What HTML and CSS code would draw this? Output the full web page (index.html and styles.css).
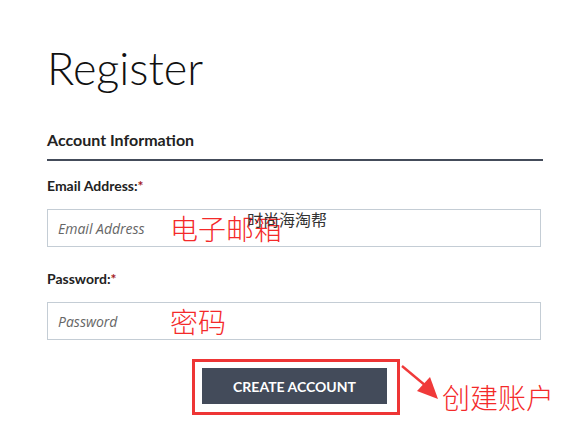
FILE: index.html
```html
<!DOCTYPE html>
<html lang="en">
	<head>
		<meta charset="UTF-8" />
		<meta name="viewport" content="width=device-width, initial-scale=1.0" />
		<title>Register</title>
		<link rel="stylesheet" href="styles.css">
	</head>
	<body>
		<section class="register">
			<h1 class="title">Register</h1>
			<h2 class="section-heading">Account Information</h2>

			<div class="field">
				<label class="field-label" for="email">Email Address:<span class="required">*</span></label>
				<div class="input-wrap">
					<input type="text" class="input" id="email" placeholder="Email Address" />
					<span class="note note-email">电子邮箱</span>
					<span class="watermark">时尚海淘帮</span>
				</div>
			</div>

			<div class="field">
				<label class="field-label" for="password">Password:<span class="required">*</span></label>
				<div class="input-wrap">
					<input type="password" class="input" id="password" placeholder="Password" />
					<span class="note note-password">密码</span>
				</div>
			</div>

			<div class="actions">
				<div class="highlight">
					<button class="submit-btn">CREATE ACCOUNT</button>
				</div>
				<svg class="arrow" viewBox="0 0 40 36" xmlns="http://www.w3.org/2000/svg">
					<path d="M1 1 L25 21" stroke="#f03a3a" stroke-width="2.4" fill="none" />
					<polygon points="37,34 16,26 29,12" fill="#f03a3a" />
				</svg>
				<span class="note note-submit">创建账户</span>
			</div>
		</section>
	</body>
</html>
```

FILE: styles.css
```css
body {
	box-sizing: border-box;
	margin: 0;
	background: #ffffff;
	font-family: Lato, "Noto Sans", sans-serif;
	color: #222222;
}

.register {
	width: 496px;
	padding: 0 0 0 47px;
}

.title {
	margin: 0;
	padding-top: 42px;
	font-size: 45px;
	font-weight: 300;
	line-height: 52px;
	color: #111111;
}

.section-heading {
	margin: 37px 0 0;
	padding-bottom: 10px;
	font-size: 16px;
	font-weight: 700;
	line-height: 18px;
	color: #222222;
	border-bottom: 2px solid #444c5a;
}

.field {
	margin-top: 17px;
}

.field + .field {
	margin-top: 24px;
}

.field-label {
	display: block;
	font-size: 14px;
	font-weight: 700;
	line-height: 16px;
	color: #222222;
}

.required {
	color: #a31c24;
}

.input-wrap {
	position: relative;
	margin-top: 15px;
	width: 494px;
}

.input {
	box-sizing: border-box;
	width: 100%;
	height: 38px;
	padding: 0 10px;
	border: 1px solid #c4cdd5;
	outline: none;
	font-family: "Open Sans", sans-serif;
	font-size: 14px;
}

.input::placeholder {
	color: #666666;
	font-style: italic;
}

.note {
	font-family: "Noto Sans CJK SC", sans-serif;
	font-size: 28px;
	font-weight: 300;
	line-height: 1;
	color: #f42a2a;
	white-space: nowrap;
}

.note-email,
.note-password {
	position: absolute;
	left: 123px;
	top: 5px;
}

.watermark {
	position: absolute;
	left: 200px;
	top: 2px;
	font-family: "Noto Sans CJK SC", sans-serif;
	font-size: 16px;
	line-height: 1;
	color: #333333;
	white-space: nowrap;
}

.actions {
	display: flex;
	align-items: flex-start;
	margin-top: 19px;
	padding-left: 145px;
}

.actions > * {
	flex-shrink: 0;
}

.highlight {
	border: 3px solid #ee3535;
	padding: 6px 10px 8px 7px;
}

.submit-btn {
	width: 185px;
	height: 36px;
	border: none;
	outline: none;
	background-color: #434b5a;
	color: #ffffff;
	font-family: Lato, sans-serif;
	font-size: 14px;
	font-weight: 700;
	cursor: pointer;
}

.arrow {
	width: 40px;
	height: 36px;
	margin: 6px 0 0 1px;
}

.note-submit {
	margin: 24px 0 0 1px;
}
```
